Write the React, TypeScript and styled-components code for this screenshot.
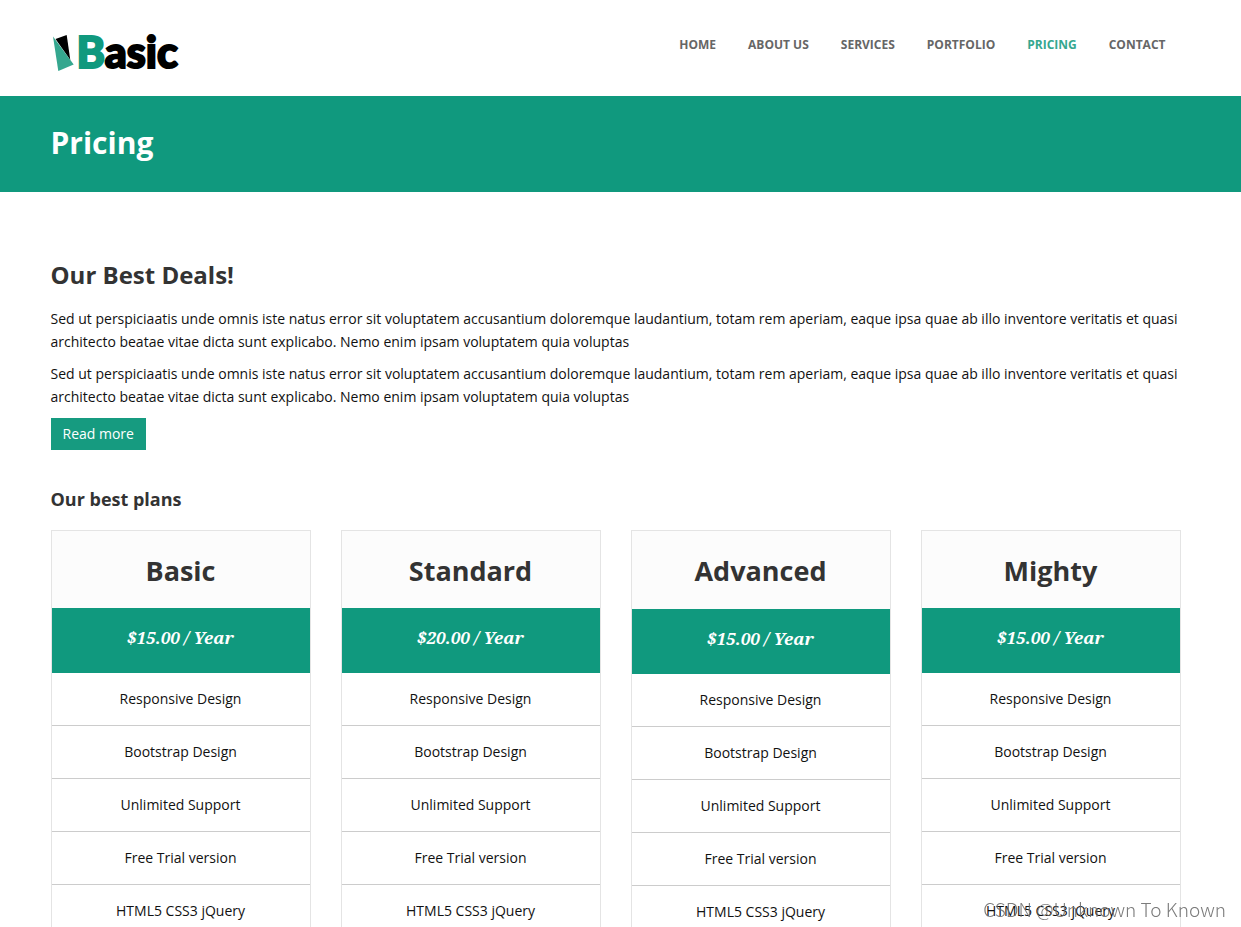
import React from "react";
import styled, { createGlobalStyle } from "styled-components";

const GREEN = "#10997e";

const GlobalStyle = createGlobalStyle`
  *, *::before, *::after { box-sizing: border-box; }
  html, body { margin: 0; }
  body {
    background: #fff;
    color: #111;
    font-family: "Open Sans", "Noto Sans", sans-serif;
    font-size: 14px;
    line-height: 23px;
  }
`;

const Container = styled.div`
  max-width: 1170px;
  margin: 0 auto;
  padding: 0 25px 0 15px;
`;

const HeaderBar = styled(Container).attrs({ as: "header" })`
  display: flex;
  justify-content: space-between;
  align-items: flex-start;
  height: 96px;
`;

const Brand = styled.a`
  display: flex;
  align-items: flex-start;
  gap: 2px;
  padding-top: 33px;
  color: #000;
  text-decoration: none;
`;

const BrandName = styled.span`
  font-family: Lato, "Open Sans", sans-serif;
  font-weight: 900;
  font-size: 43px;
  line-height: 38px;
  -webkit-text-stroke: 2px currentColor;
`;

const Accent = styled.span`
  color: ${GREEN};
`;

const Nav = styled.nav`
  display: flex;
  gap: 32px;
  padding: 33px 15px 0 0;
`;

const NavLink = styled.a<{ $active?: boolean }>`
  color: ${(p) => (p.$active ? "#35a78f" : "#666")};
  font-size: 12px;
  font-weight: 700;
  text-decoration: none;
  text-transform: uppercase;
`;

const Banner = styled.section`
  background: ${GREEN};
  height: 96px;
  padding-top: 30px;
`;

const BannerTitle = styled.h1`
  margin: 0;
  color: #fff;
  font-size: 30px;
  font-weight: 700;
  line-height: 34px;
`;

const Main = styled(Container).attrs({ as: "main" })`
  padding-top: 70px;
`;

const SectionTitle = styled.h2`
  margin: 0 0 19px;
  color: #333;
  font-size: 24px;
  font-weight: 700;
  line-height: 26px;
`;

const Text = styled.p`
  margin: 0 0 9px;
`;

const ReadMore = styled.button`
  display: block;
  height: 32px;
  margin-top: 10px;
  padding: 0 12px 1px;
  border: 0;
  background: #169b80;
  color: #fff;
  font: inherit;
`;

const PlansTitle = styled.h3`
  margin: 39px 0 21px;
  color: #333;
  font-size: 18px;
  font-weight: 700;
  line-height: 20px;
`;

const Plans = styled.div`
  display: grid;
  grid-template-columns: repeat(4, 1fr);
  gap: 30px;
`;

const Plan = styled.article`
  border: 1px solid #e4e4e4;
  text-align: center;
`;

const PlanName = styled.h4<{ $featured?: boolean }>`
  margin: 0;
  height: ${(p) => (p.$featured ? 78 : 77)}px;
  padding-top: 24px;
  background: #fcfcfc;
  color: #333;
  font-size: 27px;
  font-weight: 700;
  line-height: 32px;
`;

const Price = styled.div`
  height: 65px;
  padding-top: 18px;
  background: ${GREEN};
  color: #fff;
  font-family: "Noto Serif", "Liberation Serif", serif;
  font-size: 17px;
  font-style: italic;
  font-weight: 700;
  line-height: 24px;
`;

const Features = styled.ul`
  margin: 0;
  padding: 0;
  list-style: none;
`;

const Feature = styled.li`
  padding: 14px 0 15px;
  border-bottom: 1px solid #ccc;
`;

const Watermark = styled.div`
  position: fixed;
  right: 15px;
  bottom: 7px;
  color: rgba(110, 110, 110, 0.9);
  font-family: "Noto Sans CJK SC", sans-serif;
  font-size: 19px;
  font-weight: 300;
  line-height: 22px;
`;

const links = ["Home", "About us", "Services", "Portfolio", "Pricing", "Contact"];

const plans = [
  { name: "Basic", price: "$15.00 / Year" },
  { name: "Standard", price: "$20.00 / Year" },
  { name: "Advanced", price: "$15.00 / Year", featured: true },
  { name: "Mighty", price: "$15.00 / Year" },
];

const features = [
  "Responsive Design",
  "Bootstrap Design",
  "Unlimited Support",
  "Free Trial version",
  "HTML5 CSS3 jQuery",
];

const deal =
  "Sed ut perspiciaatis unde omnis iste natus error sit voluptatem accusantium doloremque laudantium, totam rem aperiam, eaque ipsa quae ab illo inventore veritatis et quasi architecto beatae vitae dicta sunt explicabo. Nemo enim ipsam voluptatem quia voluptas";

const LogoMark = () => (
  <svg width="24" height="38" viewBox="0 0 24 38" aria-hidden="true">
    <path d="M4.5 6 L15.7 2 L19.3 27 Z" fill="#000" />
    <path d="M2 3.5 L22.7 31.5 L7.3 38 Z" fill="#35a78f" />
  </svg>
);

export default function App() {
  return (
    <>
      <GlobalStyle />
      <HeaderBar>
        <Brand href="#">
          <LogoMark />
          <BrandName>
            <Accent>B</Accent>asic
          </BrandName>
        </Brand>
        <Nav>
          {links.map((l) => (
            <NavLink key={l} href="#" $active={l === "Pricing"}>
              {l}
            </NavLink>
          ))}
        </Nav>
      </HeaderBar>
      <Banner>
        <Container>
          <BannerTitle>Pricing</BannerTitle>
        </Container>
      </Banner>
      <Main>
        <SectionTitle>Our Best Deals!</SectionTitle>
        <Text>{deal}</Text>
        <Text>{deal}</Text>
        <ReadMore type="button">Read more</ReadMore>
        <PlansTitle>Our best plans</PlansTitle>
        <Plans>
          {plans.map((p) => (
            <Plan key={p.name}>
              <PlanName $featured={p.featured}>{p.name}</PlanName>
              <Price>{p.price}</Price>
              <Features>
                {features.map((f) => (
                  <Feature key={f}>{f}</Feature>
                ))}
              </Features>
            </Plan>
          ))}
        </Plans>
      </Main>
      <Watermark>CSDN @Unknown To Known</Watermark>
    </>
  );
}
